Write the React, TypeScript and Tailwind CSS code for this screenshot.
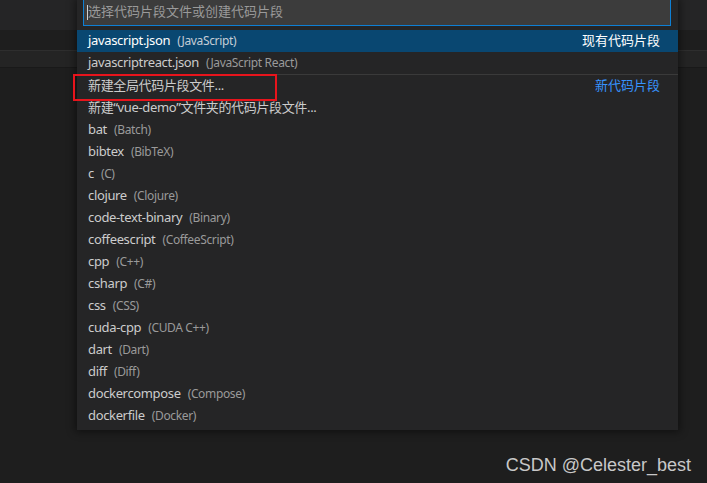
import React from "react";

type Item = {
  label: string;
  desc?: string;
  right?: string;
  selected?: boolean;
  sepAbove?: boolean;
  boxed?: boolean;
};

const items: Item[] = [
  { label: "javascript.json", desc: "(JavaScript)", right: "现有代码片段", selected: true },
  { label: "javascriptreact.json", desc: "(JavaScript React)" },
  { label: "新建全局代码片段文件...", right: "新代码片段", sepAbove: true, boxed: true },
  { label: "新建\u201cvue-demo\u201d文件夹的代码片段文件..." },
  { label: "bat", desc: "(Batch)" },
  { label: "bibtex", desc: "(BibTeX)" },
  { label: "c", desc: "(C)" },
  { label: "clojure", desc: "(Clojure)" },
  { label: "code-text-binary", desc: "(Binary)" },
  { label: "coffeescript", desc: "(CoffeeScript)" },
  { label: "cpp", desc: "(C++)" },
  { label: "csharp", desc: "(C#)" },
  { label: "css", desc: "(CSS)" },
  { label: "cuda-cpp", desc: "(CUDA C++)" },
  { label: "dart", desc: "(Dart)" },
  { label: "diff", desc: "(Diff)" },
  { label: "dockercompose", desc: "(Compose)" },
  { label: "dockerfile", desc: "(Docker)" },
];

const font = { fontFamily: '"Noto Sans", "Noto Sans CJK SC", sans-serif' };

function Row({ item }: { item: Item }) {
  return (
    <div
      className={
        "relative flex items-center h-[22px] pl-[11px] pr-[18px] tracking-[-0.35px] " +
        (item.selected ? "bg-[#094771] " : "") +
        (item.sepAbove ? "border-t border-[#3a3a3a] h-[23px] " : "")
      }
    >
      <span className={"text-[13px] " + (item.selected ? "text-white" : "text-[#cccccc]")}>
        {item.label}
      </span>
      {item.desc && (
        <span className={"ml-[7px] text-[12px] " + (item.selected ? "text-[#c4cdd6]" : "text-[#9a9a9a]")}>
          {item.desc}
        </span>
      )}
      {item.right && (
        <span
          className={
            "ml-auto text-[13px] tracking-normal " + (item.selected ? "text-white" : "text-[#3794ff]")
          }
        >
          {item.right}
        </span>
      )}
      {item.boxed && (
        <div className="absolute left-[-4px] top-[-1px] w-[204px] h-[27px] border-2 border-[#e8141c] z-10" />
      )}
    </div>
  );
}

export default function App() {
  return (
    <div className="relative w-[707px] h-[483px] overflow-hidden bg-[#1e1e1e]" style={font}>
      {/* editor background */}
      <div className="flex flex-col">
        <div className="h-[30px] bg-[#252526]" />
        <div className="h-[20px] bg-[#1e1e1e]" />
        <div className="h-[1px] bg-[#2e2e2e]" />
        <div className="h-[16px] bg-[#242424]" />
        <div className="h-[1px] bg-[#191919]" />
      </div>

      {/* quick pick */}
      <div className="absolute left-[77px] top-0 w-[601px] bg-[#252526] pb-[3px] shadow-[0_0_8px_2px_rgba(0,0,0,0.45)]">
        <div className="px-[6px] pr-[7px] pb-[4px]">
          <div className="-mt-[2px] h-[28px] border border-[#0e7fd4] bg-[#3c3c3c] flex items-center pl-[3px]">
            <span className="w-[1px] h-[15px] bg-[#d0d0d0]" />
            <span className="text-[13px] text-[#9a9a9a]">选择代码片段文件或创建代码片段</span>
          </div>
        </div>
        <div className="flex flex-col">
          {items.map((it, i) => (
            <Row key={i} item={it} />
          ))}
        </div>
      </div>

      <div
        className="absolute right-[16px] top-[452px] text-[18px] text-[#c8c8c8]"
        style={{ fontFamily: '"Liberation Sans", Arial, sans-serif' }}
      >
        CSDN @Celester_best
      </div>
    </div>
  );
}
